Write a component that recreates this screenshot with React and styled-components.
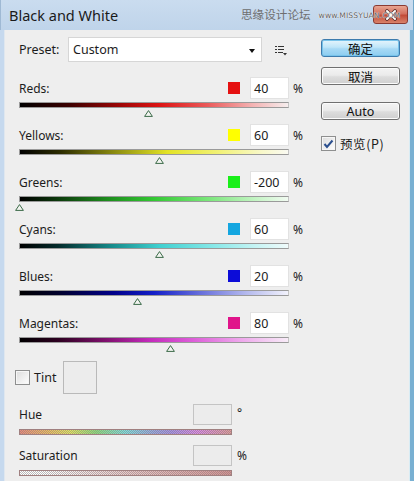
import React from "react";
import styled, { createGlobalStyle } from "styled-components";

const GlobalStyle = createGlobalStyle`
  html, body {
    margin: 0;
    padding: 0;
    background: #eeeeee;
    overflow: hidden;
  }
  * {
    box-sizing: border-box;
  }
`;

const UI_FONT = `"Noto Sans", "Open Sans", "Noto Sans CJK SC", sans-serif`;
const CJK_FONT = `"Noto Sans CJK SC", "Noto Sans", sans-serif`;

// 창 틀
const Window = styled.div`
  width: 414px;
  height: 481px;
  display: flex;
  flex-direction: column;
  background: #eeeeee;
  font-family: ${UI_FONT};
  font-size: 12px;
  color: #1c1c1c;
`;

const TitleBar = styled.div`
  position: relative;
  height: 30px;
  flex-shrink: 0;
  display: flex;
  align-items: center;
  padding: 0 5px 0 8px;
  background: linear-gradient(to bottom, #cadcef 0%, #bfd4ea 100%);
  border-left: 1px solid #9fb9d4;
  border-right: 1px solid #6fa6c8;
`;

const Title = styled.span`
  font-size: 14.5px;
  color: #1a1a1a;
  margin-top: -1px;
`;

const CloseButton = styled.div`
  margin-left: auto;
  flex-shrink: 0;
  align-self: flex-start;
  margin-top: 5px;
  width: 35px;
  height: 19px;
  border-radius: 3px;
  border: 1px solid #8a3a32;
  background: linear-gradient(to bottom, #e8a592 0%, #d3705e 45%, #c24b38 55%, #d9826a 100%);
  display: flex;
  align-items: center;
  justify-content: center;
`;

const Watermark = styled.div`
  position: absolute;
  top: 6px;
  left: 240px;
  display: flex;
  align-items: center;
  gap: 8px;
  white-space: nowrap;
  color: #6e6e6e;
  pointer-events: none;
`;

const WatermarkCn = styled.span`
  font-family: ${CJK_FONT};
  font-size: 11.6px;
`;

const WatermarkUrl = styled.span`
  font-family: "DejaVu Sans", sans-serif;
  font-size: 7.6px;
  letter-spacing: 0.1px;
  color: #5f5f5f;
  text-shadow: 0 0 1px #fff, 0 0 1px #fff;
  margin-top: 2px;
`;

const Frame = styled.div`
  flex: 1;
  display: flex;
  border-left: 4px solid #c6d9ee;
  border-right: 4px solid #79b0d2;
  box-shadow: inset 1px 0 0 #dfe7ef, inset -1px 0 0 #d8ecf4;
  padding-left: 15px;
`;

const MainColumn = styled.div`
  width: 286px;
  display: flex;
  flex-direction: column;
`;

const SideColumn = styled.div`
  width: 79px;
  margin-left: 16px;
  padding-top: 9px;
  display: flex;
  flex-direction: column;
`;

// 프리셋
const PresetRow = styled.div`
  margin-top: 7px;
  height: 25px;
  display: flex;
  align-items: center;
`;

const PresetLabel = styled.span`
  width: 49px;
  font-size: 12.5px;
`;

const Select = styled.div`
  width: 194px;
  height: 25px;
  background: #ffffff;
  border: 1px solid #d6d6d6;
  display: flex;
  align-items: center;
  padding: 0 6px 0 4px;
  font-size: 12.5px;
`;

const SelectArrow = styled.span`
  margin-left: auto;
  width: 0;
  height: 0;
  border-left: 3.5px solid transparent;
  border-right: 3.5px solid transparent;
  border-top: 4px solid #111;
  margin-top: 2px;
`;

const MenuIcon = styled.svg`
  margin-left: 13px;
  margin-top: 1px;
`;

// 채널 슬라이더
const ChannelList = styled.div`
  margin-top: 15px;
  display: flex;
  flex-direction: column;
  gap: 7px;
`;

const Channel = styled.div`
  display: flex;
  flex-direction: column;
`;

const FieldHeader = styled.div`
  height: ${(p) => p.$h || 22}px;
  display: flex;
  align-items: center;
`;

const FieldLabel = styled.span`
  flex: 1;
`;

const Swatch = styled.span`
  width: 12px;
  height: 12px;
  background: ${(p) => p.$color};
  margin-right: 10px;
`;

const ValueBox = styled.div`
  width: 39px;
  height: 100%;
  background: ${(p) => (p.$disabled ? "#ececec" : "#ffffff")};
  border: 1px solid ${(p) => (p.$disabled ? "#c4c4c4" : "#e2e2e2")};
  display: flex;
  align-items: center;
  padding-left: 3px;
  font-size: 12.5px;
`;

const Unit = styled.span`
  width: ${(p) => p.$w || 16}px;
  padding-left: ${(p) => p.$pad || 4}px;
  align-self: ${(p) => (p.$top ? "flex-start" : "center")};
`;

const SliderWrap = styled.div`
  position: relative;
  width: 270px;
  height: 15px;
  margin-top: 3px;
`;

const Track = styled.div`
  width: ${(p) => p.$w || 270}px;
  height: 6px;
  border: 1px solid #9a9a9a;
  border-right-color: #c4c4c4;
  background: ${(p) => p.$bg};
`;

const Thumb = styled.svg`
  position: absolute;
  top: 8px;
`;

// 틴트
const TintRow = styled.div`
  margin-top: 9px;
  height: 33px;
  display: flex;
  align-items: center;
`;

const CheckBox = styled.span`
  width: 15px;
  height: 15px;
  border: 1px solid #8e8f8f;
  background: linear-gradient(135deg, #dcdcdc 0%, #f4f4f4 70%, #ffffff 100%);
  box-shadow: inset 0 0 0 1px #f6f6f6;
  display: flex;
  align-items: center;
  justify-content: center;
  flex-shrink: 0;
`;

const TintCheck = styled(CheckBox)`
  margin-left: -4px;
`;

const TintLabel = styled.span`
  margin-left: 4px;
  width: 29px;
  font-size: 12.5px;
`;

const TintSwatch = styled.div`
  width: 34px;
  height: 33px;
  border: 1px solid #b9b9b9;
  background: #ececec;
`;

const TintField = styled.div`
  margin-top: 10px;
  width: 228px;
  display: flex;
  flex-direction: column;
`;

const TintBar = styled(Track)`
  margin-top: 4px;
  border-color: #a08080;
`;

// 오른쪽 버튼
const DialogButton = styled.div`
  height: 18px;
  margin-top: ${(p) => p.$mt || 0}px;
  border-radius: 3px;
  border: 1px solid ${(p) => (p.$primary ? "#3d7bad" : "#707070")};
  background: ${(p) =>
    p.$primary
      ? "linear-gradient(to bottom, #e6f5fc 0%, #bfe6f9 45%, #a7d9f5 55%, #8ccdf0 100%)"
      : "linear-gradient(to bottom, #f3f3f3 0%, #ebebeb 45%, #dddddd 55%, #cfcfcf 100%)"};
  box-shadow: ${(p) =>
    p.$primary ? "inset 0 0 0 1px #78c3ea" : "inset 0 0 0 1px #fbfbfb"};
  display: flex;
  align-items: center;
  justify-content: center;
  font-family: ${(p) => (p.$cjk ? CJK_FONT : UI_FONT)};
  font-size: 12.5px;
  color: #111;
`;

const PreviewRow = styled.div`
  margin-top: 14px;
  display: flex;
  align-items: center;
  gap: 4px;
  font-family: ${CJK_FONT};
  font-size: 12.5px;
`;

const PreviewText = styled.span`
  letter-spacing: 0.6px;
`;

const CHANNELS = [
  {
    name: "Reds:",
    color: "#e51111",
    value: 40,
    bg: "linear-gradient(to right, #000 0%, #3a0000 18%, #a00606 38%, #dc1414 52%, #ea5a5a 70%, #f4b4b4 87%, #f6eeee 100%)",
  },
  {
    name: "Yellows:",
    color: "#ffff00",
    value: 60,
    bg: "linear-gradient(to right, #000 0%, #2c2c00 15%, #8a8a10 35%, #e3e326 55%, #f2f27a 75%, #f8f8c8 90%, #fafaf2 100%)",
  },
  {
    name: "Greens:",
    color: "#19ef19",
    value: -200,
    bg: "linear-gradient(to right, #000 0%, #0a300a 12%, #1c8a1c 32%, #33c833 50%, #7ae67a 70%, #c4f4c4 88%, #f2fbf2 100%)",
  },
  {
    name: "Cyans:",
    color: "#14a6e0",
    value: 60,
    bg: "linear-gradient(to right, #000 0%, #032a2a 14%, #158a8a 34%, #3fd0d0 52%, #86e8e8 72%, #c6f4f4 88%, #f0fbfb 100%)",
  },
  {
    name: "Blues:",
    color: "#0c0cd8",
    value: 20,
    bg: "linear-gradient(to right, #000 0%, #00002e 15%, #00008a 35%, #1420c8 50%, #6a72dc 68%, #b6bbee 85%, #f2f2fc 100%)",
  },
  {
    name: "Magentas:",
    color: "#e0148a",
    value: 80,
    bg: "linear-gradient(to right, #000 0%, #2c0020 14%, #80106e 32%, #c22aba 48%, #dc5cd8 64%, #eea6ec 82%, #f8ecf8 100%)",
  },
];

const DITHER =
  "repeating-conic-gradient(rgba(128,128,128,0.55) 0 25%, transparent 0 50%) 0 0 / 2px 2px";

const HUE_BG = `${DITHER}, linear-gradient(to right, #f08a7a 0%, #f2c060 14%, #e6e860 24%, #8ee07a 36%, #80e0e0 50%, #9aa4e4 64%, #a88ee8 72%, #e088e8 84%, #e49a9a 100%)`;
const SAT_BG = `${DITHER}, linear-gradient(to right, #ffffff 0%, #ffffff 10%, #ecc8c8 50%, #d89090 100%)`;

const MIN = -200;
const MAX = 300;

const SliderThumb = ({ value }) => {
  const left = ((value - MIN) / (MAX - MIN)) * 269 - 4;
  return (
    <Thumb width="9" height="7" viewBox="0 0 9 7" style={{ left }}>
      <polygon
        points="4.5,0.6 8.4,6.4 0.6,6.4"
        fill="#f2f4f0"
        stroke="#3b6a48"
        strokeWidth="1"
      />
    </Thumb>
  );
};

const ChannelSlider = ({ channel }) => (
  <Channel>
    <FieldHeader>
      <FieldLabel>{channel.name}</FieldLabel>
      <Swatch $color={channel.color} />
      <ValueBox>{channel.value}</ValueBox>
      <Unit>%</Unit>
    </FieldHeader>
    <SliderWrap>
      <Track $bg={channel.bg} />
      <SliderThumb value={channel.value} />
    </SliderWrap>
  </Channel>
);

export default function App() {
  return (
    <>
      <GlobalStyle />
      <Window>
        <TitleBar>
          <Title>Black and White</Title>
          <CloseButton>
            <svg width="14" height="12" viewBox="0 0 14 12">
              <path
                d="M3 2 L11 10 M11 2 L3 10"
                stroke="#5a2a24"
                strokeWidth="3.6"
                strokeLinecap="round"
              />
              <path
                d="M3 2 L11 10 M11 2 L3 10"
                stroke="#ffffff"
                strokeWidth="2"
                strokeLinecap="round"
              />
            </svg>
          </CloseButton>
          <Watermark>
            <WatermarkCn>思缘设计论坛</WatermarkCn>
            <WatermarkUrl>www.MISSYUAN.COM</WatermarkUrl>
          </Watermark>
        </TitleBar>

        <Frame>
          <MainColumn>
            <PresetRow>
              <PresetLabel>Preset:</PresetLabel>
              <Select>
                Custom
                <SelectArrow />
              </Select>
              <MenuIcon width="12" height="11" viewBox="0 0 12 11">
                <rect x="0" y="1" width="2" height="1" fill="#333" />
                <rect x="3" y="1" width="6" height="1" fill="#333" />
                <rect x="0" y="4" width="2" height="1" fill="#333" />
                <rect x="3" y="4" width="6" height="1" fill="#333" />
                <rect x="0" y="7" width="2" height="1" fill="#333" />
                <rect x="3" y="7" width="5" height="1" fill="#333" />
                <polygon points="8,8 12,8 10,10.5" fill="#333" />
              </MenuIcon>
            </PresetRow>

            <ChannelList>
              {CHANNELS.map((c) => (
                <ChannelSlider key={c.name} channel={c} />
              ))}
            </ChannelList>

            <TintRow>
              <TintCheck />
              <TintLabel>Tint</TintLabel>
              <TintSwatch />
            </TintRow>

            <TintField>
              <FieldHeader $h={21}>
                <FieldLabel>Hue</FieldLabel>
                <ValueBox $disabled />
                <Unit $w={15} $pad={5} $top>
                  °
                </Unit>
              </FieldHeader>
              <TintBar $w={213} $bg={HUE_BG} />
            </TintField>

            <TintField>
              <FieldHeader $h={21}>
                <FieldLabel>Saturation</FieldLabel>
                <ValueBox $disabled />
                <Unit $w={15} $pad={5}>
                  %
                </Unit>
              </FieldHeader>
              <TintBar $w={213} $bg={SAT_BG} />
            </TintField>
          </MainColumn>

          <SideColumn>
            <DialogButton $primary $cjk>
              确定
            </DialogButton>
            <DialogButton $cjk $mt={10}>
              取消
            </DialogButton>
            <DialogButton $mt={17}>Auto</DialogButton>
            <PreviewRow>
              <CheckBox>
                <svg width="11" height="10" viewBox="0 0 11 10">
                  <path
                    d="M1.5 5 L4 8 L9.5 1.5"
                    fill="none"
                    stroke="#2b4f8e"
                    strokeWidth="2"
                  />
                </svg>
              </CheckBox>
              <PreviewText>预览(P)</PreviewText>
            </PreviewRow>
          </SideColumn>
        </Frame>
      </Window>
    </>
  );
}
